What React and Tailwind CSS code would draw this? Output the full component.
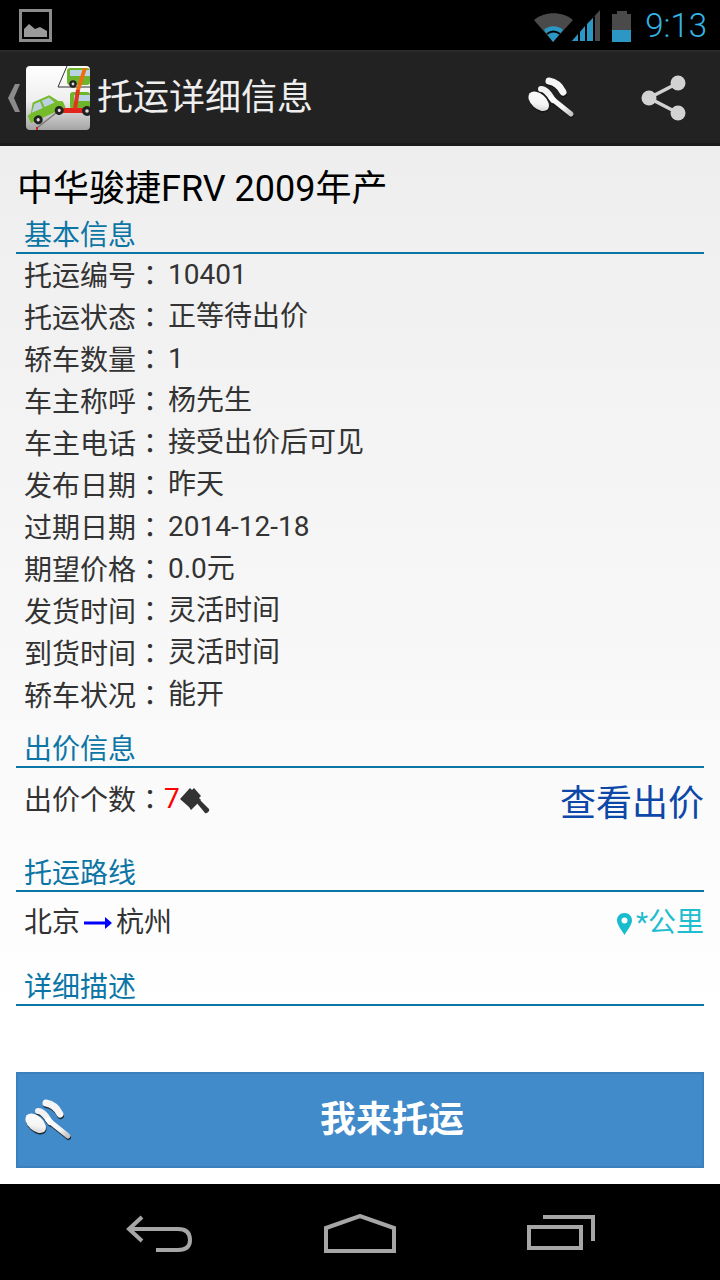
import React from "react";

const basics = [
  ["托运编号", "10401"],
  ["托运状态", "正等待出价"],
  ["轿车数量", "1"],
  ["车主称呼", "杨先生"],
  ["车主电话", "接受出价后可见"],
  ["发布日期", "昨天"],
  ["过期日期", "2014-12-18"],
  ["期望价格", "0.0元"],
  ["发货时间", "灵活时间"],
  ["到货时间", "灵活时间"],
  ["轿车状况", "能开"],
];

const HammerIcon = ({ id }) => (
  <svg width="48" height="48" viewBox="0 0 48 48" className="block">
    <defs>
      <linearGradient id={id} x1="0" y1="0" x2="1" y2="1">
        <stop offset="0" stopColor="#ffffff" />
        <stop offset="0.6" stopColor="#f4f4f4" />
        <stop offset="1" stopColor="#c4c4c4" />
      </linearGradient>
    </defs>
    <g fill="none" stroke="#111" strokeLinecap="round" opacity="0.8" transform="translate(0.5 1.5)">
      <ellipse cx="11.7" cy="27.3" rx="12" ry="7.5" transform="rotate(42 11.7 27.3)" fill="#111" stroke="none" />
      <path d="M22 7C28 8 33 12 36 18" strokeWidth="7" />
      <path d="M14 15C19 15 22 20 26 26" strokeWidth="6" />
      <path d="M24 24L44 40" strokeWidth="5" />
    </g>
    <ellipse cx="11.7" cy="27.3" rx="12" ry="7.5" transform="rotate(42 11.7 27.3)" fill={`url(#${id})`} />
    <path d="M22 7C28 8 33 12 36 18" fill="none" stroke="#f5f5f5" strokeWidth="7" strokeLinecap="round" />
    <path d="M14 15C19 15 22 20 26 26" fill="none" stroke="#f2f2f2" strokeWidth="6" strokeLinecap="round" />
    <path d="M24 24L44 40" fill="none" stroke={`url(#${id})`} strokeWidth="5" strokeLinecap="round" />
  </svg>
);

const SectionTitle = ({ children }) => (
  <div className="h-[38px] border-b-2 border-[#0b76a6] pl-[8px] text-[28px] leading-[40px] text-[#0b76a6]">
    {children}
  </div>
);

const Colon = () => <span className="font-['Noto_Sans_CJK_TC']">：</span>;

const StatusBar = () => (
  <div className="flex h-[50px] items-center bg-black pl-[19px] pr-[13px]">
    <svg width="33" height="33" viewBox="0 0 33 33">
      <rect x="1.5" y="1.5" width="30" height="30" fill="none" stroke="#8c8c8c" strokeWidth="3" />
      <path d="M5 28V20L10 15L16 20L21 18L28 22V28Z" fill="#9a9a9a" />
    </svg>
    {/* wifi and signal */}
    <svg width="66" height="32" viewBox="0 0 66 32" className="ml-auto mt-[2px]">
      <path d="M0 10C10 1 29 1 39 10L19 32Z" fill="#4a4a4a" />
      <path d="M10 20C15 15 24 15 29 20L19 32Z" fill="#2c97c4" />
      <path d="M13 24C17 21 22 21 26 24" fill="none" stroke="#000" strokeWidth="2" />
      <path d="M38 31L66 0V31Z" fill="#4a4a4a" />
      <path d="M38 31L44 24V31ZM46 31V22L51 16V31ZM53 31V14L59 8V31Z" fill="#2c97c4" />
      <path d="M44 24L46 22V31H44ZM51 16L53 14V31H51ZM59 8L61 6V31H59Z" fill="#000" />
    </svg>
    <svg width="19" height="31" viewBox="0 0 19 31" className="ml-[12px] mt-[2px]">
      <path d="M5 0H15V3H19V19H0V3H5Z" fill="#4a4a4a" />
      <rect y="19" width="19" height="12" fill="#2c97c4" />
    </svg>
    <span className="ml-[14px] text-[33px] font-light leading-none text-[#33b5e5]">9:13</span>
  </div>
);

const TruckLogo = () => (
  <svg width="64" height="64" viewBox="0 0 64 64" className="ml-[4px]">
    <defs>
      <linearGradient id="logoBg" x1="0" y1="0" x2="0" y2="1">
        <stop offset="0" stopColor="#ffffff" />
        <stop offset="0.55" stopColor="#eeeeee" />
        <stop offset="1" stopColor="#a4a4a4" />
      </linearGradient>
    </defs>
    <rect width="64" height="64" rx="4" fill="url(#logoBg)" />
    <path d="M41 0L32 21H64" fill="none" stroke="#333" strokeWidth="1" />
    <rect x="41" y="2" width="23" height="17" rx="3" fill="#6fb52c" />
    <rect x="44" y="4" width="20" height="6" fill="#b9d2e4" />
    <circle cx="47" cy="18" r="3.8" fill="#222" />
    <circle cx="47" cy="18" r="1.4" fill="#ddd" />
    <rect x="44" y="26" width="20" height="17" rx="3" fill="#6fb52c" />
    <rect x="48" y="29" width="16" height="6" fill="#b9d2e4" />
    <path d="M29 42H64V47H29Z" fill="#e2241c" />
    <path d="M57 2L61 2L54 24L50 24Z" fill="#ef6c10" />
    <path d="M50 24H54L51 43H47Z" fill="#e2331c" />
    <circle cx="61" cy="45" r="5" fill="#222" />
    <circle cx="61" cy="45" r="1.8" fill="#ddd" />
    <path d="M11 62L30 47" fill="none" stroke="#777" strokeWidth="1.5" />
    <rect x="10" y="61" width="2" height="3" fill="#c22" />
    <g transform="rotate(-24 19 42)">
      <path d="M0 42L4 41L10 32H28L34 41L38 43V50H0Z" fill="#76bb2c" />
      <path d="M5 41L11 34H17V41ZM19 34H27L30 41H19Z" fill="#bcd0e2" />
      <circle cx="8" cy="50" r="4.5" fill="#222" />
      <circle cx="8" cy="50" r="1.6" fill="#ddd" />
      <circle cx="31" cy="50" r="4.5" fill="#222" />
      <circle cx="31" cy="50" r="1.6" fill="#ddd" />
    </g>
  </svg>
);

const ActionBar = () => (
  <div className="flex h-[96px] items-center border-t-2 border-b-[3px] border-t-[#2a2a2a] border-b-[#1b1b1b] bg-[#222222]">
    <svg width="14" height="28" viewBox="0 0 14 28" className="ml-[8px]">
      <path d="M12 0H7L0 14L7 28H12L6 14Z" fill="#8a8a8a" />
    </svg>
    <TruckLogo />
    <span className="ml-[7px] text-[36px] leading-none text-[#eeeeee]">托运详细信息</span>
    <div className="ml-auto mr-[66px]">
      <HammerIcon id="hammerTop" />
    </div>
    <svg width="46" height="46" viewBox="0 0 46 46" className="mr-[33px]">
      <path d="M37 8L8 23L37 38" fill="none" stroke="#d2d2d2" strokeWidth="3.5" />
      <circle cx="37" cy="8" r="7.5" fill="#d2d2d2" />
      <circle cx="8" cy="23" r="7.5" fill="#d2d2d2" />
      <circle cx="37" cy="38" r="7.5" fill="#d2d2d2" />
    </svg>
  </div>
);

const NavBar = () => (
  <div className="flex h-[96px] items-center justify-between bg-black pl-[126px] pr-[124px] pt-[4px]">
    <svg width="68" height="38" viewBox="0 0 68 38" fill="none" stroke="#a6a6a6" strokeWidth="4">
      <path d="M16 2L3 14L16 26" />
      <path d="M3 14H52C60 14 64 18 64 25C64 32 60 35 52 35H30" />
    </svg>
    <svg width="72" height="40" viewBox="0 0 72 40" fill="none" stroke="#a6a6a6" strokeWidth="4">
      <path d="M2 14L36 2L70 14V37H2Z" />
    </svg>
    <svg width="70" height="38" viewBox="0 0 70 38" fill="none" stroke="#a6a6a6" strokeWidth="4">
      <rect x="3" y="12" width="52" height="21" />
      <path d="M17 2H67V26" />
    </svg>
  </div>
);

export default function App() {
  return (
    <div className="flex h-[1280px] w-[720px] flex-col overflow-hidden bg-white font-['Roboto','Noto_Sans_CJK_SC',sans-serif]">
      <StatusBar />
      <ActionBar />
      <div className="flex flex-1 flex-col bg-gradient-to-b from-[#eeeeee] to-[#ffffff] to-[85%] px-[16px]">
        <h1 className="mt-[18px] pl-[1px] text-[36px] font-normal leading-[50px] text-black">中华骏捷FRV 2009年产</h1>
        <div className="mt-[2px]">
          <SectionTitle>基本信息</SectionTitle>
          <div className="pl-[8px]">
            {basics.map(([label, value]) => (
              <div key={label} className="flex h-[42px] items-center text-[28px] text-[#333333]">
                <span className="w-[144px] whitespace-nowrap">{label}<Colon /></span>
                <span>{value}</span>
              </div>
            ))}
          </div>
        </div>
        <div className="mt-[14px]">
          <SectionTitle>出价信息</SectionTitle>
          <div className="flex h-[67px] items-start justify-between pl-[8px]">
            <div className="flex h-[62px] items-center text-[28px] text-[#333333]">
              <span className="w-[140px] whitespace-nowrap">出价个数<Colon /></span>
              <span className="text-[#ff0000]">7</span>
              <svg width="30" height="30" viewBox="0 0 30 30" className="mt-[6px]">
                <path d="M0 12L10 1L12 3L14 1L21 9L19 11L21 13L11 23L9 20Z" fill="#333" />
                <path d="M16 15L19 12L29 22C30 24 27 27 25 26Z" fill="#333" />
              </svg>
            </div>
            <a className="mt-[13px] text-[36px] leading-[46px] text-[#0d47a8]">查看出价</a>
          </div>
        </div>
        <div className="mt-[19px]">
          <SectionTitle>托运路线</SectionTitle>
          <div className="flex h-[62px] items-center justify-between pl-[8px] text-[28px] text-[#333333]">
            <div className="flex items-center">
              <span>北京</span>
              <svg width="28" height="12" viewBox="0 0 28 12" className="ml-[4px] mr-[4px]">
                <path d="M0 4.5H21V0L28 6L21 12V7.5H0Z" fill="#0000ff" />
              </svg>
              <span>杭州</span>
            </div>
            <div className="flex items-center text-[#1fbdd0]">
              <svg width="15" height="22" viewBox="0 0 15 22" className="mr-[4px] mt-[2px]">
                <path fillRule="evenodd" d="M7.5 0C12 0 15 3.2 15 7.5C15 11.5 10.5 17 7.5 22C4.5 17 0 11.5 0 7.5C0 3.2 3 0 7.5 0ZM7.5 4.5A3 3 0 1 0 7.5 10.5A3 3 0 1 0 7.5 4.5Z" fill="#17bccf" />
              </svg>
              <span>*公里</span>
            </div>
          </div>
        </div>
        <div className="mt-[14px]">
          <SectionTitle>详细描述</SectionTitle>
        </div>
        <button className="relative mt-[66px] flex h-[96px] w-full items-center justify-center border-2 border-[#3a80bd] bg-[#428bca] text-[36px] font-bold text-white">
          <span className="absolute left-[6px] top-[22px]">
            <HammerIcon id="hammerBtn" />
          </span>
          <span className="ml-[64px]">我来托运</span>
        </button>
      </div>
      <NavBar />
    </div>
  );
}
